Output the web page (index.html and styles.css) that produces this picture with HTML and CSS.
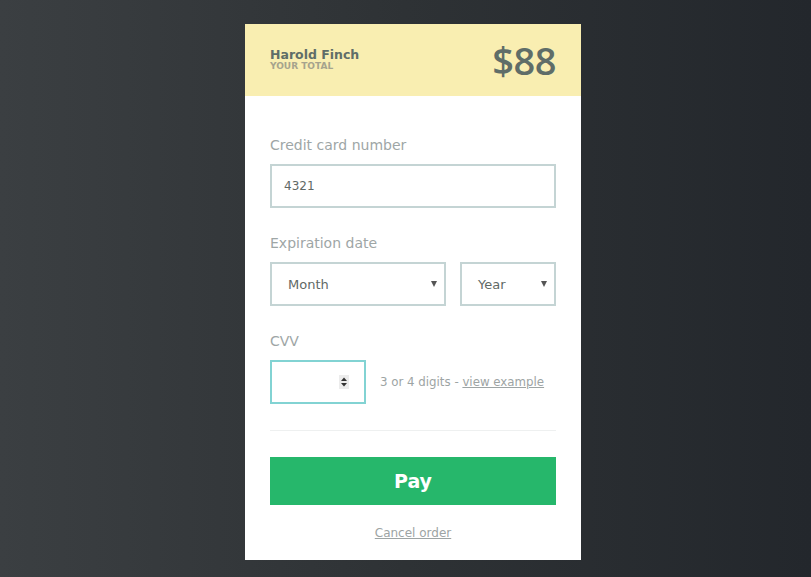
FILE: index.html
```html
<!DOCTYPE html>
<html>
<head>
<meta charset="utf-8">
<link rel="stylesheet" href="styles.css">
</head>
<body>
<div class="card">
  <div class="header">
    <div class="who">
      <div class="name">Harold Finch</div>
      <div class="total-label">YOUR TOTAL</div>
    </div>
    <div class="amount">$88</div>
  </div>
  <div class="body">
    <div class="group">
      <div class="label">Credit card number</div>
      <div class="input">4321</div>
    </div>
    <div class="group">
      <div class="label">Expiration date</div>
      <div class="row">
        <div class="input select month">Month<span class="caret"></span></div>
        <div class="input select year">Year<span class="caret"></span></div>
      </div>
    </div>
    <div class="group last">
      <div class="label">CVV</div>
      <div class="row cvv-row">
        <div class="input cvv">
          <svg class="spin" width="10" height="14" viewBox="0 0 10 14"><rect x="0" y="0" width="10" height="14" fill="#ececec"/><path d="M2 6 L5 2.5 L8 6 Z" fill="#333"/><path d="M2 8 L5 11.5 L8 8 Z" fill="#333"/></svg>
        </div>
        <div class="hint">3 or 4 digits - <span class="link">view example</span></div>
      </div>
    </div>
    <div class="divider"></div>
    <div class="pay">Pay</div>
    <div class="cancel"><span class="link">Cancel order</span></div>
  </div>
</div>
</body>
</html>
```

FILE: styles.css
```css
html, body {
  margin: 0;
  height: 100%;
}
body {
  background: linear-gradient(to right, #3b3f42 0%, #2e3235 50%, #23272c 100%);
  font-family: "DejaVu Sans", "Noto Sans", sans-serif;
  overflow: hidden;
}
.card {
  width: 336px;
  margin: 24px 0 0 245px;
  background: #fff;
}
.header {
  height: 72px;
  background: #f9eeb1;
  padding: 0 25px 0 25px;
  display: flex;
  align-items: center;
  justify-content: space-between;
  box-sizing: border-box;
}
.who {
  margin-top: -1px;
}
.name {
  font-size: 12.5px;
  font-weight: bold;
  color: #5f6d68;
  line-height: 14px;
}
.total-label {
  font-size: 9px;
  font-weight: bold;
  color: #a6a38d;
  line-height: 9px;
}
.amount {
  font-family: "Open Sans", "DejaVu Sans", sans-serif;
  font-weight: 600;
  font-size: 38px;
  color: #5f6d68;
  line-height: 40px;
  letter-spacing: -0.5px;
}
.body {
  padding: 39px 25px 17px 25px;
}
.group {
  margin-bottom: 25px;
}
.group.last {
  margin-bottom: 26px;
}
.label {
  font-size: 14px;
  color: #9ea6a6;
  line-height: 20px;
  margin-bottom: 9px;
}
.input {
  height: 44px;
  box-sizing: border-box;
  border: 2px solid #c4d4d4;
  display: flex;
  align-items: center;
  padding-left: 12px;
  font-size: 12px;
  color: #5f6966;
  position: relative;
}
.row {
  display: flex;
  gap: 14px;
}
.select {
  padding-left: 16px;
  font-size: 13px;
}
.month {
  width: 176px;
}
.year {
  width: 96px;
}
.caret {
  position: absolute;
  top: 17px;
  right: 7px;
  width: 0;
  height: 0;
  border-left: 3px solid transparent;
  border-right: 3px solid transparent;
  border-top: 6px solid #555;
}
.cvv-row {
  align-items: center;
}
.cvv {
  width: 96px;
  border-color: #82d3d3;
}
.spin {
  position: absolute;
  left: 67px;
  top: 13px;
}
.hint {
  font-size: 11.8px;
  color: #9da4a4;
}
.link {
  text-decoration: underline;
}
.divider {
  height: 1px;
  background: #eef0f0;
  margin-bottom: 26px;
}
.pay {
  height: 48px;
  background: #26b76b;
  color: #fff;
  font-weight: bold;
  font-size: 19px;
  display: flex;
  align-items: center;
  justify-content: center;
}
.cancel {
  margin-top: 18px;
  text-align: center;
  font-size: 12px;
  line-height: 20px;
  color: #9da4a4;
}
```
